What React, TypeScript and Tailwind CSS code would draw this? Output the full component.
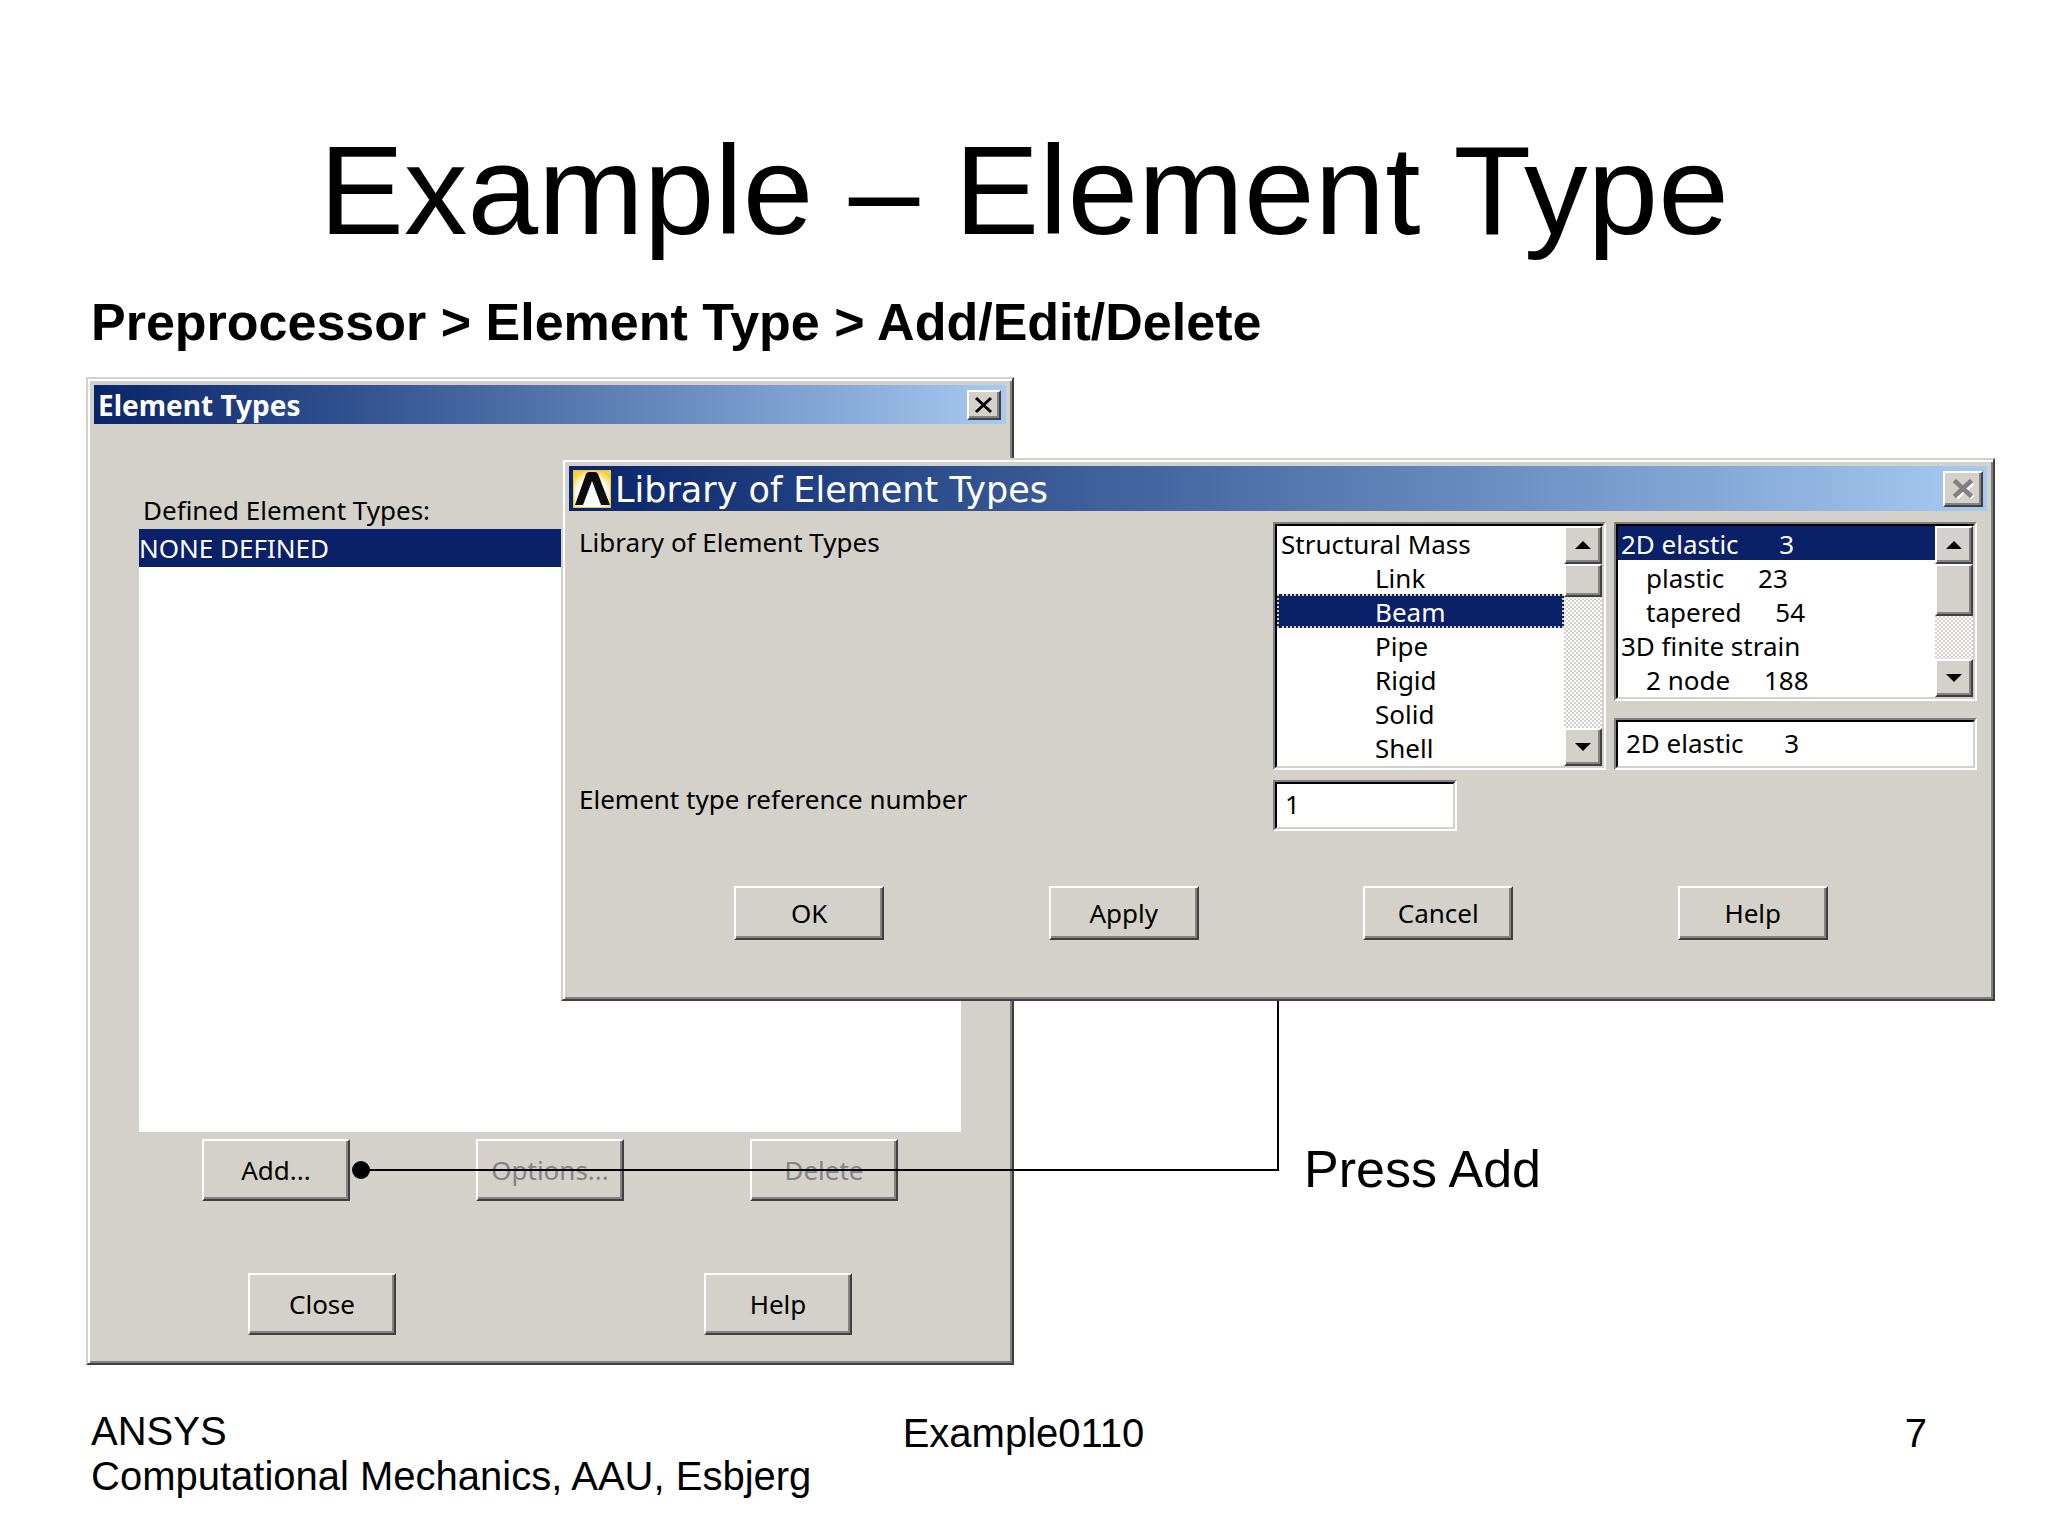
import type { ReactNode } from "react";
import { clsx } from "clsx";

const FACE = "bg-[#d3d1c9]";
const UI_FONT = "font-['Noto_Sans','Open_Sans',sans-serif]";
const RAISED =
  "border-2 border-t-white border-l-white border-r-[#404040] border-b-[#404040] shadow-[inset_-2px_-2px_0_#858380]";

const categories = ["Structural Mass", "Link", "Beam", "Pipe", "Rigid", "Solid", "Shell"];

const elements = [
  { label: "2D elastic\u00a0\u00a0\u00a0\u00a0\u00a0 3", nested: false },
  { label: "plastic\u00a0\u00a0\u00a0\u00a0 23", nested: true },
  { label: "tapered\u00a0\u00a0\u00a0\u00a0 54", nested: true },
  { label: "3D finite strain", nested: false },
  { label: "2 node\u00a0\u00a0\u00a0\u00a0 188", nested: true },
];

function WindowFrame({ className, label, children }: { className?: string; label: string; children: ReactNode }) {
  return (
    <section
      aria-label={label}
      className={clsx(
        "border-2 border-t-[#d3d1c9] border-l-[#d3d1c9] border-r-[#404040] border-b-[#404040] p-1.5",
        "shadow-[inset_2px_2px_0_#fff,inset_-2px_-2px_0_#808080]",
        FACE,
        UI_FONT,
        className
      )}
    >
      {children}
    </section>
  );
}

function PushButton({ className, disabled, children }: { className: string; disabled?: boolean; children: ReactNode }) {
  return (
    <button
      type="button"
      disabled={disabled}
      className={clsx("text-[26px] leading-8 text-black disabled:text-[#858380]", RAISED, FACE, className)}
    >
      {children}
    </button>
  );
}

function CloseButton({ className, disabled }: { className: string; disabled?: boolean }) {
  return (
    <button
      type="button"
      aria-label="Close window"
      disabled={disabled}
      className={clsx("flex items-center justify-center", RAISED, FACE, className)}
    >
      <svg
        viewBox="0 0 20 18"
        className={disabled ? "h-[21px] w-[23px]" : "h-[18px] w-5"}
        fill="none"
        strokeWidth={disabled ? 4 : 3}
      >
        {disabled && <path d="M4 4 L18 17 M18 4 L4 17" stroke="#fff" />}
        <path d="M2 2 L17 16 M17 2 L2 16" stroke={disabled ? "#808080" : "#000"} />
      </svg>
    </button>
  );
}

// Classic scrollbar: arrow, thumb, dithered track, arrow
function ScrollBar({ thumb }: { thumb: string }) {
  const part = clsx("flex shrink-0 items-center justify-center", RAISED, FACE);
  return (
    <div className="flex w-[38px] shrink-0 flex-col bg-[repeating-conic-gradient(#d3d1c9_0_25%,#fff_0_50%)] bg-[length:4px_4px]">
      <button type="button" aria-label="Scroll up" className={clsx(part, "h-[38px]")}>
        <svg viewBox="0 0 16 8" className="h-2 w-4">
          <path d="M8 0 L16 8 H0 Z" />
        </svg>
      </button>
      <div className={clsx(part, thumb)} />
      <button type="button" aria-label="Scroll down" className={clsx(part, "mt-auto h-[38px]")}>
        <svg viewBox="0 0 16 8" className="h-2 w-4">
          <path d="M0 0 H16 L8 8 Z" />
        </svg>
      </button>
    </div>
  );
}

function Sunken({ className, children }: { className?: string; children: ReactNode }) {
  return (
    <div className={clsx("border-2 border-t-[#808080] border-l-[#808080] border-r-white border-b-white", className)}>
      <div className="flex h-full border-2 border-t-black border-l-black border-r-[#d3d1c9] border-b-[#d3d1c9] bg-white">
        {children}
      </div>
    </div>
  );
}

const LIST =
  "min-w-0 flex-1 appearance-none overflow-hidden bg-white bg-none p-0 text-[26px] text-black outline-none [scrollbar-width:none]";
const OPTION =
  "h-[34px] min-h-0 py-0 pr-0 leading-[34px] checked:bg-[#0a2069] checked:bg-none checked:text-white";

function AnsysLogo() {
  return (
    <svg viewBox="0 0 38 38" className="size-[38px] shrink-0">
      <defs>
        <radialGradient id="logo-glow" cx="50%" cy="62%" r="65%">
          <stop offset="0.6" stopColor="#fff" />
          <stop offset="1" stopColor="#f7cf3c" />
        </radialGradient>
      </defs>
      <rect x="0.5" y="0.5" width="37" height="37" fill="url(#logo-glow)" stroke="#efc74a" />
      <path d="M2 35 L13 4 Q14 2 16 2 H22 Q24 2 25 4 L37 35 H28 L19 11 L10 35 Z" fill="#0c0c0c" />
    </svg>
  );
}

function ElementTypesWindow() {
  return (
    <WindowFrame label="Element Types" className="w-[928px]">
      <header className="flex h-[39px] items-center justify-between bg-linear-to-r from-[#0a246a] to-[#a6caf0] pr-[5px] pl-1">
        <h2 className="text-[28px] leading-8 font-bold text-white">Element Types</h2>
        <CloseButton className="h-[30px] w-[34px]" />
      </header>
      <div className="mx-[45px] mt-[70px]">
        <div id="defined-label" className="pl-1 text-[26px] leading-8">
          Defined Element Types:
        </div>
        <ul aria-labelledby="defined-label" className="mt-[3px] h-[603px] bg-white">
          <li className="h-[38px] bg-[#0a2069] text-[26px] leading-[38px] text-white">NONE DEFINED</li>
        </ul>
        <div className="mt-[7px] grid grid-cols-3 justify-items-center">
          <PushButton className="h-[62px] w-[148px]">Add...</PushButton>
          <PushButton className="h-[62px] w-[148px]" disabled>
            Options...
          </PushButton>
          <PushButton className="h-[62px] w-[148px]" disabled>
            Delete
          </PushButton>
        </div>
      </div>
      <div className="mt-[72px] mb-[22px] grid grid-cols-2 justify-items-center">
        <PushButton className="h-[62px] w-[148px]">Close</PushButton>
        <PushButton className="h-[62px] w-[148px]">Help</PushButton>
      </div>
    </WindowFrame>
  );
}

function LibraryDialog() {
  return (
    <WindowFrame label="Library of Element Types" className="absolute top-[81px] right-0 left-[475px]">
      <header className="flex h-[45px] items-center bg-linear-to-r from-[#0a246a] to-[#a6caf0] pr-1 pl-1">
        <AnsysLogo />
        <h2 className="ml-1 flex-1 pt-1 font-['DejaVu_Sans',sans-serif] text-[35px] leading-[41px] text-white">
          Library of Element Types
        </h2>
        <CloseButton className="h-9 w-10" disabled />
      </header>

      <form onSubmit={(e) => e.preventDefault()}>
        <div className="mt-[11px] grid grid-cols-[1fr_333px_363px] gap-x-2 gap-y-2.5 px-2.5 text-[26px] leading-8">
          <label htmlFor="category" className="pt-1">
            Library of Element Types
          </label>
          <Sunken className="h-[248px]">
            <select id="category" size={7} defaultValue="Beam" className={LIST}>
              {categories.map((name, i) => (
                <option
                  key={name}
                  value={name}
                  className={clsx(
                    OPTION,
                    i === 0 ? "pl-1" : "pl-[98px]",
                    "checked:outline-2 checked:-outline-offset-2 checked:outline-[#d8d6a0] checked:outline-dotted"
                  )}
                >
                  {name}
                </option>
              ))}
            </select>
            <ScrollBar thumb="h-[33px]" />
          </Sunken>
          <div className="flex flex-col justify-between">
            <Sunken className="h-[179px]">
              <select aria-label="Element" size={5} defaultValue={elements[0].label} className={LIST}>
                {elements.map(({ label, nested }) => (
                  <option key={label} value={label} className={clsx(OPTION, nested ? "pl-7" : "pl-[3px]")}>
                    {label}
                  </option>
                ))}
              </select>
              <ScrollBar thumb="h-[52px]" />
            </Sunken>
            <Sunken className="h-[52px]">
              <input
                aria-label="Selected element"
                defaultValue={elements[0].label}
                className="w-full bg-transparent pb-0.5 pl-2 outline-none"
              />
            </Sunken>
          </div>

          <label htmlFor="reference" className="pt-[3px]">
            Element type reference number
          </label>
          <Sunken className="h-[51px] w-[184px]">
            <input id="reference" defaultValue="1" className="w-full bg-transparent pb-1 pl-2 outline-none" />
          </Sunken>
        </div>

        <div className="mt-[55px] mb-[53px] grid grid-cols-4 justify-items-center pr-[77px] pl-[83px]">
          {["OK", "Apply", "Cancel", "Help"].map((name) => (
            <PushButton key={name} className="h-[54px] w-[150px]">
              {name}
            </PushButton>
          ))}
        </div>
      </form>
    </WindowFrame>
  );
}

export default function App() {
  return (
    <main className="min-h-screen bg-white pt-[120px] font-['Liberation_Sans',Arial,sans-serif] text-black">
      <h1 className="text-center text-[127px] leading-[140px]">Example – Element Type</h1>
      <p className="mt-8 pl-[91px] text-[52px] leading-[60px] font-bold">
        Preprocessor &gt; Element Type &gt; Add/Edit/Delete
      </p>

      <div className="relative mt-[25px] mr-[53px] ml-[86px]">
        <ElementTypesWindow />
        {/* callout from the Add button */}
        <div className="absolute top-[600px] left-[275px] h-[194px] w-[918px] border-r-2 border-b-2 border-black" />
        <div className="absolute top-[784px] left-[266px] size-[18px] rounded-full bg-black" />
        <p className="absolute top-[762px] left-[1218px] text-[52px] leading-[60px]">Press Add</p>
        <LibraryDialog />
      </div>

      <footer className="mt-11 grid grid-cols-3 pr-[121px] pl-[91px] text-[40px] leading-[45px]">
        <div className="whitespace-nowrap">
          ANSYS
          <br />
          Computational Mechanics, AAU, Esbjerg
        </div>
        <div className="pt-0.5 pl-[29px] text-center">Example0110</div>
        <div className="pt-0.5 text-right">7</div>
      </footer>
    </main>
  );
}
